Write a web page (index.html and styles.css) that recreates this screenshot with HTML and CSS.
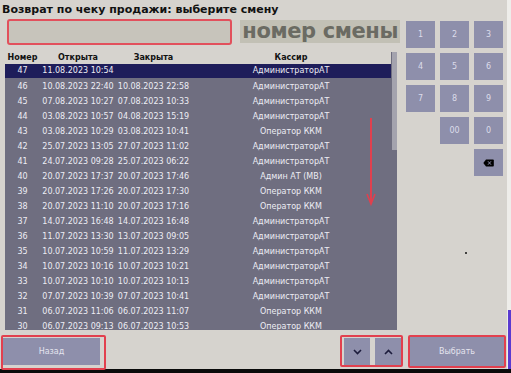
FILE: index.html
```html
<!DOCTYPE html>
<html lang="ru">
<head>
<meta charset="utf-8">
<title>Возврат по чеку продажи</title>
<link rel="stylesheet" href="styles.css">
</head>
<body>
<div class="screen">
  <div class="app">
    <div class="title">Возврат по чеку продажи: выберите смену</div>
    <div class="main">
      <div class="left">
        <div class="search">
          <div class="input"></div>
          <div class="label">номер смены</div>
        </div>
        <div class="table">
          <div class="grid">
            <div class="row head"><span>Номер</span><span>Открыта</span><span>Закрыта</span><span>Кассир</span></div>
            <div class="body">
              <div class="row sel"><span>47</span><span>11.08.2023 10:54</span><span></span><span>АдминистраторАТ</span></div>
              <div class="row"><span>46</span><span>10.08.2023 22:40</span><span>10.08.2023 22:58</span><span>АдминистраторАТ</span></div>
              <div class="row"><span>45</span><span>07.08.2023 10:27</span><span>07.08.2023 10:33</span><span>АдминистраторАТ</span></div>
              <div class="row"><span>44</span><span>03.08.2023 10:57</span><span>04.08.2023 15:19</span><span>АдминистраторАТ</span></div>
              <div class="row"><span>43</span><span>03.08.2023 10:29</span><span>03.08.2023 10:41</span><span>Оператор ККМ</span></div>
              <div class="row"><span>42</span><span>25.07.2023 13:05</span><span>27.07.2023 11:02</span><span>АдминистраторАТ</span></div>
              <div class="row"><span>41</span><span>24.07.2023 09:28</span><span>25.07.2023 06:22</span><span>АдминистраторАТ</span></div>
              <div class="row"><span>40</span><span>20.07.2023 17:37</span><span>20.07.2023 17:46</span><span>Админ АТ (МВ)</span></div>
              <div class="row"><span>39</span><span>20.07.2023 17:26</span><span>20.07.2023 17:30</span><span>Оператор ККМ</span></div>
              <div class="row"><span>38</span><span>20.07.2023 11:10</span><span>20.07.2023 17:16</span><span>Оператор ККМ</span></div>
              <div class="row"><span>37</span><span>14.07.2023 16:48</span><span>14.07.2023 16:48</span><span>АдминистраторАТ</span></div>
              <div class="row"><span>36</span><span>11.07.2023 13:30</span><span>13.07.2023 09:05</span><span>АдминистраторАТ</span></div>
              <div class="row"><span>35</span><span>10.07.2023 10:59</span><span>11.07.2023 13:29</span><span>АдминистраторАТ</span></div>
              <div class="row"><span>34</span><span>10.07.2023 10:16</span><span>10.07.2023 10:21</span><span>АдминистраторАТ</span></div>
              <div class="row"><span>33</span><span>10.07.2023 10:10</span><span>10.07.2023 10:13</span><span>АдминистраторАТ</span></div>
              <div class="row"><span>32</span><span>07.07.2023 10:39</span><span>07.07.2023 10:41</span><span>АдминистраторАТ</span></div>
              <div class="row"><span>31</span><span>06.07.2023 11:06</span><span>06.07.2023 11:07</span><span>Оператор ККМ</span></div>
              <div class="row"><span>30</span><span>06.07.2023 09:13</span><span>06.07.2023 10:53</span><span>Оператор ККМ</span></div>
            </div>
          </div>
          <div class="scrollbar"><div class="thumb"></div></div>
        </div>
      </div>
      <div class="keypad">
        <div class="key">1</div><div class="key">2</div><div class="key">3</div>
        <div class="key">4</div><div class="key">5</div><div class="key">6</div>
        <div class="key">7</div><div class="key">8</div><div class="key">9</div>
        <div class="gap"></div><div class="key">00</div><div class="key">0</div>
        <div class="gap"></div><div class="gap"></div>
        <div class="key"><svg width="11" height="8" viewBox="0 0 11 8"><path d="M3 0.5 H10 a0.8 0.8 0 0 1 0.8 0.8 V6.7 a0.8 0.8 0 0 1 -0.8 0.8 H3 L0.3 4 Z" fill="#000"/><path d="M5 2.3 L8 5.7 M8 2.3 L5 5.7" stroke="#8e8fab" stroke-width="1"/></svg></div>
      </div>
    </div>
    <div class="footer">
      <div class="mark back-mark"><div class="btn back">Назад</div></div>
      <div class="spacer"></div>
      <div class="mark nav-mark">
        <div class="btn nav"><svg width="9" height="6" viewBox="0 0 9 6"><path d="M1 1 L4.5 4.5 L8 1" fill="none" stroke="#1c1c3c" stroke-width="1.6"/></svg></div>
        <div class="btn nav"><svg width="9" height="6" viewBox="0 0 9 6"><path d="M1 5 L4.5 1.5 L8 5" fill="none" stroke="#1c1c3c" stroke-width="1.6"/></svg></div>
      </div>
      <div class="mark ok-mark"><div class="btn ok">Выбрать</div></div>
    </div>
  </div>
  <div class="edge"><div class="edge-top"></div><div class="edge-bottom"></div></div>
</div>
<div class="bottom-bar"></div>
<svg class="arrow" width="12" height="90" viewBox="0 0 12 90"><path d="M6 0 V84" stroke="#e0404e" stroke-width="2"/><path d="M2 76 L6 86 L10 76" fill="none" stroke="#e0404e" stroke-width="1.6"/></svg>
<div class="dot"></div>
</body>
</html>
```

FILE: styles.css
```css
* { box-sizing: border-box; }
html, body {
  margin: 0;
  padding: 0;
  width: 511px;
  height: 373px;
  overflow: hidden;
  background: #d6d3ce;
  font-family: "DejaVu Sans", sans-serif;
}
body { position: relative; }
.screen {
  display: flex;
  height: 369px;
}
.app {
  width: 507px;
  display: flex;
  flex-direction: column;
}
.edge {
  width: 4px;
  display: flex;
  flex-direction: column;
}
.edge-top { height: 310px; background: #eeedea; }
.edge-bottom { flex: 1; border-left: 1px solid #eeedea; background: #5a3ad0; }
.bottom-bar { height: 4px; background: #0a0a0a; }

.title {
  height: 19px;
  padding: 3px 0 0 2px;
  font-size: 11px;
  font-weight: bold;
  color: #111;
  line-height: 14px;
  white-space: nowrap;
}
.main {
  display: flex;
  height: 311px;
}
.left {
  width: 400px;
  display: flex;
  flex-direction: column;
}
.search {
  display: flex;
  height: 26px;
}
.input {
  margin-left: 7px;
  width: 225px;
  height: 26px;
  border: 2px solid #e2505c;
  border-radius: 3px;
  background: #c7c4bb;
}
.label {
  margin-left: 8px;
  margin-top: 1px;
  width: 160px;
  height: 23px;
  background: #c2c0b5;
  color: #6b6b63;
  font-size: 21px;
  font-weight: bold;
  letter-spacing: -0.4px;
  line-height: 23px;
  text-align: right;
  padding-right: 2px;
  white-space: nowrap;
  overflow: hidden;
}
.table {
  margin: 7px 0 0 5px;
  width: 392px;
  flex: 1;
  display: flex;
  background: #6f6e80;
  overflow: hidden;
}
.grid {
  flex: 1;
  display: flex;
  flex-direction: column;
}
.row {
  display: grid;
  grid-template-columns: 35px 76px 75px 1fr;
  height: 15px;
  font-size: 8px;
  line-height: 15px;
  color: #ededf4;
  white-space: nowrap;
}
.row span { text-align: center; }
.row.head {
  height: 12px;
  line-height: 12px;
  background: #d6d3ce;
  color: #111;
  font-weight: bold;
}
.row.sel { background: #1e1d5a; height: 14px; line-height: 14px; margin-bottom: 1px; }
.body { flex: 1; overflow: hidden; }
.scrollbar {
  width: 5px;
  margin-left: 1px;
  display: flex;
  flex-direction: column;
}
.thumb {
  height: 98px;
  background: #a4a3ae;
}
.keypad {
  margin: 2px 0 0 6px;
  display: grid;
  grid-template-columns: repeat(3, 29px);
  grid-auto-rows: 27px;
  column-gap: 5px;
  row-gap: 5px;
  align-content: start;
}
.key {
  background: #8e8fab;
  color: #dcdcea;
  font-size: 8px;
  display: flex;
  align-items: center;
  justify-content: center;
}
.footer {
  margin-top: 5px;
  height: 34px;
  display: flex;
  align-items: flex-start;
  padding-left: 1px;
}
.spacer { flex: 1; }
.mark {
  border: 2px solid #e2404e;
  border-radius: 2px;
  display: flex;
  gap: 5px;
}
.btn {
  background: #8e8fab;
  color: #e4e4ee;
  font-size: 8px;
  display: flex;
  align-items: center;
  justify-content: center;
}
.back-mark { width: 105px; height: 35px; padding: 1px 4px 3px 0; }
.back { width: 98px; height: 27px; }
.nav-mark { width: 63px; height: 32px; padding: 1px 0 0 2px; margin-right: 5px; }
.nav { width: 26px; height: 27px; }
.ok-mark { width: 98px; height: 33px; padding: 0; margin-right: 1px; }
.ok { width: 94px; height: 29px; }

.arrow {
  position: absolute;
  left: 365px;
  top: 118px;
}
.dot {
  position: absolute;
  left: 465px;
  top: 252px;
  width: 2px;
  height: 2px;
  background: #111;
  border-radius: 50%;
}
```
